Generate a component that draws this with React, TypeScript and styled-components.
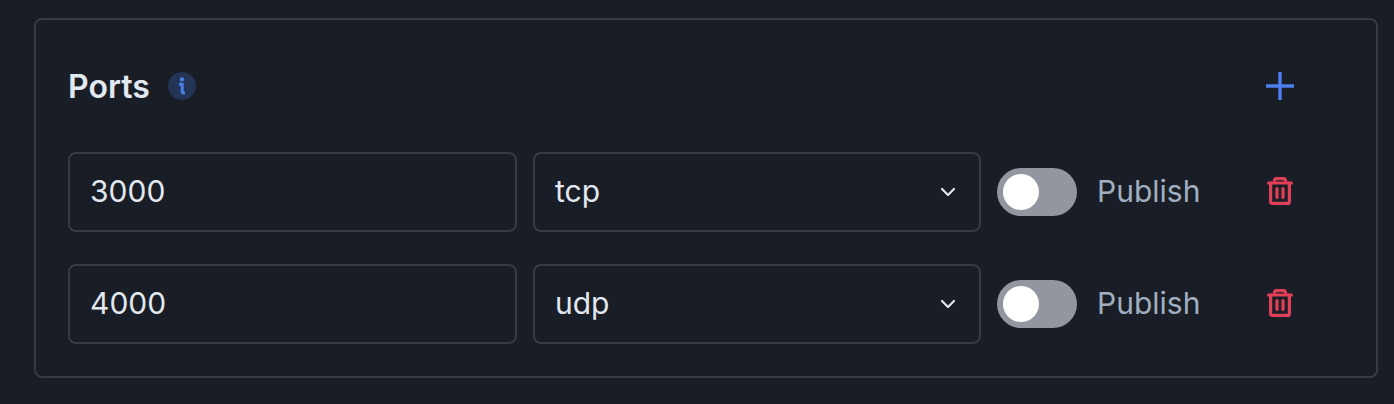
import React from "react";
import styled, { createGlobalStyle } from "styled-components";

const Global = createGlobalStyle`
  html, body { margin: 0; padding: 0; background: #191d25; }
  body { font-family: Inter, "Liberation Sans", sans-serif; }
`;

const Page = styled.div`
  width: 1394px;
  height: 404px;
  box-sizing: border-box;
  padding: 18px 16px 26px 34px;
  overflow: hidden;
`;

const Card = styled.section`
  box-sizing: border-box;
  height: 360px;
  border: 2px solid #363a42;
  border-radius: 8px;
  padding: 32px;
  display: flex;
  flex-direction: column;
  gap: 32px;
`;

const Header = styled.header`
  height: 70px;
  display: flex;
  align-items: center;
  justify-content: space-between;
`;

const TitleGroup = styled.div`
  display: flex;
  align-items: center;
  gap: 18px;
`;

const Title = styled.h2`
  margin: 2px 0 0;
  font-size: 32px;
  line-height: 36px;
  font-weight: 600;
  color: #e2e8f0;
`;

const InfoBadge = styled.span`
  width: 28px;
  height: 28px;
  border-radius: 50%;
  background: #233455;
  display: flex;
  align-items: center;
  justify-content: center;
`;

const IconSlot = styled.span`
  width: 128px;
  height: 48px;
  display: flex;
  align-items: center;
  justify-content: center;
  flex-shrink: 0;
`;

const Rows = styled.div`
  display: flex;
  flex-direction: column;
  gap: 32px;
`;

const Row = styled.div`
  display: flex;
  align-items: center;
  gap: 16px;
  height: 80px;
`;

const Field = styled.div`
  box-sizing: border-box;
  width: 449px;
  height: 80px;
  flex-shrink: 0;
  border: 2px solid #363a42;
  border-radius: 8px;
  padding: 0 20px 2px;
  display: flex;
  align-items: center;
  justify-content: space-between;
  font-size: 30px;
  color: #e2e8f0;
`;

const SelectField = styled(Field)`
  width: 448px;
  padding-right: 23px;
`;

const ChevronSvg = styled.svg`
  margin-top: 2px;
`;

const PublishGroup = styled.div`
  display: flex;
  align-items: center;
  gap: 20px;
  flex: 1;
`;

const Switch = styled.span`
  box-sizing: border-box;
  width: 80px;
  height: 48px;
  border-radius: 24px;
  background: #92979f;
  padding: 6px;
  display: flex;
  align-items: center;
`;

const Knob = styled.span`
  width: 36px;
  height: 36px;
  border-radius: 50%;
  background: #ffffff;
`;

const PublishLabel = styled.span`
  font-size: 30px;
  line-height: 36px;
  margin-top: -2px;
  color: #a0aec0;
`;

const InfoIcon = () => (
  <svg width="16" height="20" viewBox="0 0 16 20" fill="none">
    <circle cx="8" cy="3.4" r="2.2" fill="#4a7fe8" />
    <path d="M5 8.2H8.2V15.4C8.2 16.3 8.8 16.9 9.7 16.9H11" stroke="#4a7fe8" strokeWidth="3" />
  </svg>
);

const PlusIcon = () => (
  <svg width="30" height="30" viewBox="0 0 30 30" fill="none">
    <path d="M15 1V29M1 15H29" stroke="#4c80f0" strokeWidth="3.4" />
  </svg>
);

const ChevronIcon = () => (
  <ChevronSvg width="16" height="10" viewBox="0 0 16 10" fill="none">
    <path d="M2 2L8 8L14 2" stroke="#e2e8f0" strokeWidth="2.2" strokeLinecap="round" strokeLinejoin="round" />
  </ChevronSvg>
);

const TrashIcon = () => (
  <svg width="26" height="28" viewBox="0 0 26 28" fill="none" stroke="#df4058" strokeWidth="3.2" strokeLinecap="round" strokeLinejoin="round">
    <path d="M1.6 6H24.4" />
    <path d="M7.5 5.5V3.6C7.5 2.4 8.4 1.6 9.6 1.6H16.4C17.6 1.6 18.5 2.4 18.5 3.6V5.5" />
    <path d="M3.6 6V24.4C3.6 25.6 4.4 26.4 5.6 26.4H20.4C21.6 26.4 22.4 25.6 22.4 24.4V6" />
    <path d="M10 11.5V20.5M16 11.5V20.5" />
  </svg>
);

const TrashSlot = styled(IconSlot)`
  padding-bottom: 2px;
  box-sizing: border-box;
`;

const PortRow = ({ port, protocol }: { port: string; protocol: string }) => (
  <Row>
    <Field>{port}</Field>
    <SelectField>
      {protocol}
      <ChevronIcon />
    </SelectField>
    <PublishGroup>
      <Switch>
        <Knob />
      </Switch>
      <PublishLabel>Publish</PublishLabel>
    </PublishGroup>
    <TrashSlot>
      <TrashIcon />
    </TrashSlot>
  </Row>
);

export default function App() {
  return (
    <Page>
      <Global />
      <Card>
        <Header>
          <TitleGroup>
            <Title>Ports</Title>
            <InfoBadge>
              <InfoIcon />
            </InfoBadge>
          </TitleGroup>
          <IconSlot>
            <PlusIcon />
          </IconSlot>
        </Header>
        <Rows>
          <PortRow port="3000" protocol="tcp" />
          <PortRow port="4000" protocol="udp" />
        </Rows>
      </Card>
    </Page>
  );
}
